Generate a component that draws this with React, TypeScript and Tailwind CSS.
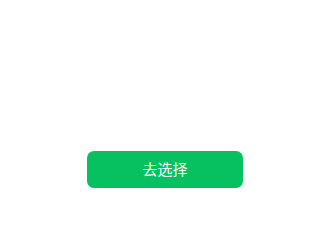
export default function App() {
  return (
    <div className="w-[330px] h-[225px] bg-white flex flex-col items-center pt-[151px]">
      <button
        className="w-[156px] h-[37px] rounded-[7px] bg-[#07c160] text-white text-[15px] flex items-center justify-center"
        style={{ fontFamily: '"Noto Sans CJK SC", "Noto Sans", sans-serif' }}
      >
        去选择
      </button>
    </div>
  )
}
